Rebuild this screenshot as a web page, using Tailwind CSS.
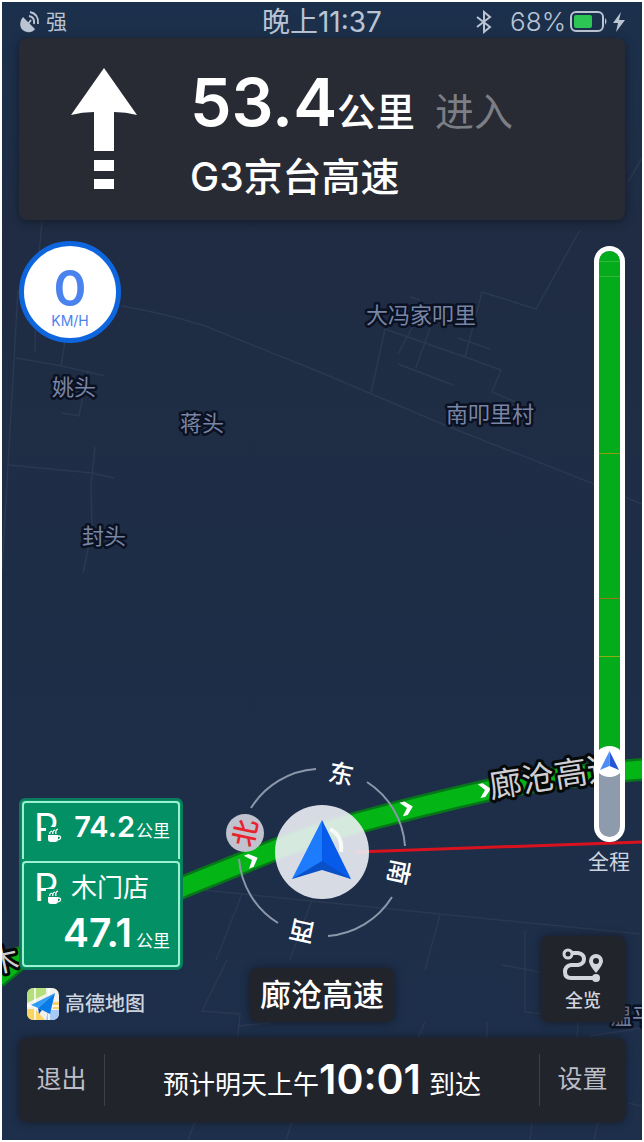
<!DOCTYPE html>
<html lang="zh-CN">
<head>
    <meta charset="UTF-8">
    <meta name="viewport" content="width=device-width, initial-scale=1.0">
    <title>高德地图导航</title>
    <script src="https://cdn.jsdelivr.net/npm/@tailwindcss/browser@4"></script>
</head>
<body class="bg-white p-[2px] font-['Inter','Noto_Sans_CJK_SC',sans-serif]">
    <main class="relative flex min-h-[calc(100vh-4px)] flex-col overflow-hidden bg-linear-to-b from-[#1b304c] via-[#1f2c43] via-20% to-[#1d2f4b]">

        <!-- Map -->
        <svg class="absolute inset-0 h-full w-full" viewBox="2 2 640 1138" preserveAspectRatio="xMidYMid slice" aria-label="地图">
            <!-- minor roads -->
            <g fill="none" stroke="#2a3850" stroke-width="1.5">
                <path d="M42 220L36 290L35 352M66 335L61 366M18 290L2 570M16 358L62 366L105 376M88 370L79 416L62 413M9 465L92 473L114 478M95 447L91 485L92 530L83 573"/>
                <path d="M121 306Q160 312 205 326L322 373L447 426L594 484L642 504M580 230L536 309L482 292L465 357M385 329L465 357L501 370L492 392L516 402M385 329L371 393M413 326L398 354M430 328L416 368M398 364L453 385M458 338L490 349M410 297L420 300M642 158L628 182"/>
                <path d="M183 888L640 934M242 894L216 960M312 900L290 960M440 915L425 970M227 960L202 1011L240 1014L238 1036M238 1026L270 1023M525 930L525 1012L580 1018M502 965L540 972M425 1022L418 1038M487 1022L487 1038M578 1022L577 1038M590 1036L642 1028M195 1122L188 1140M292 1122L286 1140M532 1122L530 1140M598 1122L594 1140M628 1103L642 1106"/>
            </g>

            <!-- route -->
            <path d="M-4 978L20 958L90 930L183 887L245 862Q300 838 360 822T485 791T648 769" fill="none" stroke="#07751a" stroke-width="23"/>
            <path d="M-4 978L20 958L90 930L183 887L245 862Q300 838 360 822T485 791T648 769" fill="none" stroke="#04b516" stroke-width="18"/>
            <g fill="#fff">
                <path id="chevron" d="M-6 -7H-1L6 0L-1 7H-6L0 0Z" transform="translate(407 808) rotate(-14)"/>
                <use href="#chevron" transform="translate(485 790) rotate(3) translate(-407 -808)"/>
                <use href="#chevron" transform="translate(252 860) rotate(-8) translate(-407 -808)"/>
            </g>
            <path d="M356 852L642 842" stroke="#d8131f" stroke-width="3"/>

            <!-- place names -->
            <g fill="#7885a5" stroke="#0a1122" stroke-width="5" stroke-linejoin="round" paint-order="stroke" font-size="22" text-anchor="middle">
                <text x="74" y="395">姚头</text>
                <text x="202" y="431">蒋头</text>
                <text x="421" y="323">大冯家叩里</text>
                <text x="490" y="422">南叩里村</text>
                <text x="104" y="544">封头</text>
                <text x="632" y="1024">温平</text>
            </g>
            <g fill="#d0ced3" stroke="#050a08" stroke-width="6" stroke-linejoin="round" paint-order="stroke" font-size="33">
                <text transform="translate(491 798) rotate(-9)">廊沧高速</text>
                <text transform="translate(-9 974) rotate(-12)" font-size="30">木</text>
            </g>

            <!-- compass -->
            <g fill="none" stroke="#8c97aa" stroke-width="2">
                <path d="M251 808A83 83 0 0 1 316 769"/>
                <path d="M367 782A83 83 0 0 1 405 846"/>
                <path d="M392 897A83 83 0 0 1 328 936"/>
                <path d="M278 923A83 83 0 0 1 239 859"/>
            </g>
            <circle cx="245" cy="833" r="19" fill="#c0c2ce"/>
            <g fill="#fff" font-size="25" font-weight="500" text-anchor="middle">
                <text transform="translate(341 774) rotate(12)" y="9">东</text>
                <text transform="translate(399 872) rotate(102)" y="9">南</text>
                <text transform="translate(302 931) rotate(192)" y="9">西</text>
                <text transform="translate(245 833) rotate(-78)" y="10" font-size="27" fill="#e8232c">北</text>
            </g>
            <circle cx="322" cy="852" r="47" fill="#eceef5" fill-opacity=".9"/>
            <path d="M330 829Q343 836 341 852" fill="none" stroke="#f8faf8" stroke-width="4"/>
            <path d="M322 820L351 879L322 868Z" fill="#065bea"/>
            <path d="M322 820L292 879L322 868Z" fill="#1d7cfe"/>
            <path d="M322 861L351 879L322 870L292 879Z" fill="#0a50c8"/>
        </svg>

        <!-- Status bar -->
        <header class="relative grid h-9 grid-cols-3 items-center px-4 text-[#bac4d3]">
            <div class="flex items-center gap-1 text-[21px]">
                <svg class="h-6 w-6" viewBox="0 0 24 24" fill="none" stroke="currentColor" stroke-width="1.8" aria-hidden="true">
                    <path d="M5 7C0 13 2 21 9 22Q14 23 17 19Z" fill="currentColor" stroke="none"/>
                    <path d="M10 14L13 10"/>
                    <path d="M11 6Q17 7 16 14M12 2Q21 4 20 14"/>
                </svg>
                <span>强</span>
            </div>
            <p class="text-center text-[28px] leading-9 whitespace-nowrap">晚上11:37</p>
            <div class="flex items-center justify-end text-[26px] font-light">
                <svg class="mr-4 h-6 w-5" viewBox="0 0 20 24" fill="none" stroke="currentColor" stroke-width="2" aria-label="蓝牙">
                    <path d="M3 7L16 17L10 22V2L16 7L3 17"/>
                </svg>
                <span>68%</span>
                <svg class="ml-1 h-6 w-14" viewBox="0 0 56 24" fill="none" aria-label="正在充电">
                    <rect x="1" y="2" width="32" height="19" rx="5" stroke="currentColor" stroke-width="2"/>
                    <rect x="4" y="5" width="18" height="13" rx="2" fill="#2bc653"/>
                    <path d="M35 8Q38 11 35 15Z" fill="currentColor"/>
                    <path d="M51 2L43 13H48L46 22L55 10H49Z" fill="currentColor"/>
                </svg>
            </div>
        </header>

        <!-- Next manoeuvre -->
        <section class="relative mx-[17px] flex h-[182px] items-center rounded-lg bg-[#282b34] pl-[52px] text-white shadow-[0_2px_8px_#141c2c]">
            <svg class="h-[122px] w-[66px]" viewBox="0 0 66 122" fill="#fff" aria-label="直行">
                <path d="M33 0L66 47Q55 44 43 44V83H23V44Q11 44 0 47Z"/>
                <path d="M23 92H43V103H23ZM23 111H43V121H23Z"/>
            </svg>
            <div class="ml-[53px] pt-1.5">
                <p class="flex items-baseline leading-[80px] whitespace-nowrap">
                    <strong class="text-[66px] font-semibold">53.4</strong>
                    <span class="text-[39px] font-medium">公里</span>
                    <span class="ml-5 text-[39px] text-[#7c7e85]">进入</span>
                </p>
                <h1 class="text-[39px] leading-[50px] font-medium">G3京台高速</h1>
            </div>
        </section>

        <section class="relative flex grow justify-between px-[17px]">
            <div class="flex flex-col items-start pt-[21px] pb-[18px]">
                <!-- Speed -->
                <div class="flex size-[102px] flex-col items-center rounded-full border-5 border-[#0e66de] bg-white pt-4 text-[#4a82ee]">
                    <strong class="text-[50px] leading-[52px] font-semibold">0</strong>
                    <span class="text-[14px] leading-[14px]">KM/H</span>
                </div>

                <!-- Service areas -->
                <div class="mt-auto w-[164px] rounded-md border-2 border-[#0a7b5c] bg-[#049065] p-px text-white">
                    <div class="flex h-[58px] items-center rounded-t-sm border-2 border-b-0 border-[#9df0cf] pr-2 pb-2 pl-2.5">
                        <div class="relative w-9 text-[38px] leading-[40px]">P
                            <svg class="absolute right-2 bottom-1 h-4 w-4 bg-[#049065]" viewBox="0 0 16 16" aria-hidden="true">
                                <path d="M2 8H12V12Q12 15 9 15H5Q2 15 2 12Z" fill="#fff"/>
                                <path d="M12 9Q16 9 14 12L12 13M4 7Q3 5 6 4M7 7Q6 4 9 3M10 7Q9 3 12 2" fill="none" stroke="#fff" stroke-width="1.3"/>
                            </svg>
                        </div>
                        <p class="ml-auto flex items-baseline text-[17px]"><strong class="mr-px text-[29px] font-semibold">74.2</strong>公里</p>
                    </div>
                    <div class="mt-0.5 h-[106px] rounded-sm border-2 border-[#9df0cf] pt-0.5 pr-2 pl-2.5">
                        <div class="flex items-center">
                            <div class="relative w-9 text-[38px] leading-[44px]">P
                                <svg class="absolute right-2 bottom-1 h-4 w-4 bg-[#049065]" viewBox="0 0 16 16" aria-hidden="true">
                                    <path d="M2 8H12V12Q12 15 9 15H5Q2 15 2 12Z" fill="#fff"/>
                                    <path d="M12 9Q16 9 14 12L12 13M4 7Q3 5 6 4M7 7Q6 4 9 3M10 7Q9 3 12 2" fill="none" stroke="#fff" stroke-width="1.3"/>
                                </svg>
                            </div>
                            <span class="ml-px text-[26px]">木门店</span>
                        </div>
                        <p class="flex items-baseline justify-end text-[17px] leading-[48px]"><strong class="mr-1 text-[39px] font-semibold">47.1</strong>公里</p>
                    </div>
                </div>

                <!-- Brand -->
                <div class="mt-[18px] ml-2 flex items-center gap-1.5">
                    <svg class="size-8" viewBox="0 0 32 32" aria-hidden="true">
                        <rect width="32" height="32" rx="7" fill="#f3f2ea"/>
                        <path d="M0 7Q0 0 7 0H19V6L0 15Z" fill="#b4df7c"/>
                        <path d="M0 21H8L18 32H7Q0 32 0 25Z" fill="#f8d465"/>
                        <path d="M26 14H32V21H26Z" fill="#f8d465"/>
                        <path d="M21 22H32V25Q32 32 25 32H19Z" fill="#a9c9f5"/>
                        <path d="M8 0V32M22 0V32M0 18H32" stroke="#fff" stroke-width="1.5"/>
                        <path d="M28 5L4 17L11 20Z" fill="#2f9cf8"/>
                        <path d="M28 5L11 20L23 26Z" fill="#087be8"/>
                        <path d="M11 20L15 22L12 26Z" fill="#0754b5"/>
                    </svg>
                    <span class="text-[20px] leading-8 font-medium text-[#ccd3de]">高德地图</span>
                </div>
            </div>

            <!-- Current road -->
            <p class="absolute bottom-4 left-1/2 -translate-x-1/2 rounded-lg bg-[#22242c] px-2.5 text-[31px] leading-[54px] font-medium whitespace-nowrap text-white shadow-[0_0_8px_#161b26]">廊沧高速</p>

            <div class="flex flex-col items-end pt-[26px] pb-4">
                <!-- Trip progress, tick places are percentages of the whole trip -->
                <div class="-mr-[5px] flex grow flex-col items-center">
                    <div class="relative w-[31px] grow overflow-hidden rounded-full border-5 border-white bg-[#8e9bad]">
                        <div class="relative bg-[#04ab1b]" style="height: 87%">
                            <i class="absolute h-px w-full bg-[#33b63c]" style="top: 2%"></i>
                            <i class="absolute h-px w-full bg-[#33b63c]" style="top: 5%"></i>
                            <i class="absolute h-px w-full bg-[#8c9a10]" style="top: 39.6%"></i>
                            <i class="absolute h-px w-full bg-[#9c7614]" style="top: 68%"></i>
                            <i class="absolute h-px w-full bg-[#8cb010]" style="top: 79.4%"></i>
                        </div>
                        <svg class="absolute -left-[5px] size-[31px]" style="top: 84.5%" viewBox="0 0 31 31" aria-hidden="true">
                            <circle cx="15.5" cy="15.5" r="15.5" fill="#fff"/>
                            <path d="M15.5 5L25 24L15.5 20Z" fill="#2456d6"/>
                            <path d="M15.5 5L6 24L15.5 20Z" fill="#4b8cf5"/>
                        </svg>
                    </div>
                    <span class="mt-1 text-[21px] leading-[32px] text-[#cdd5e0]">全程</span>
                </div>

                <button class="mt-[58px] flex h-[86px] w-[84px] flex-col items-center rounded-lg bg-[#22242c] pt-3 text-[18px] leading-[22px] font-medium text-[#d3d5dc] shadow-[0_0_8px_#161b26]">
                    <svg class="mb-2 h-[34px] w-[42px]" viewBox="0 0 42 34" fill="none" stroke="currentColor" stroke-width="4" aria-hidden="true">
                        <circle cx="6" cy="6" r="4" stroke-width="3"/>
                        <path d="M10 5H16Q22 6 22 11T16 17H9Q3 18 3 24T9 30H34"/>
                        <circle cx="34" cy="30" r="4" fill="currentColor" stroke="none"/>
                        <path d="M34 25Q27 17 27 13A7 7 0 0 1 41 13Q41 17 34 25Z" fill="currentColor" stroke="none"/>
                        <circle cx="34" cy="13" r="3" fill="#22242c" stroke="none"/>
                    </svg>
                    全览
                </button>
            </div>
        </section>

        <!-- Bottom bar -->
        <footer class="relative mx-[17px] mb-[18px] flex h-[84px] items-center rounded-lg bg-[#22242c] text-[26px] text-white shadow-[0_0_8px_#161b26]">
            <button class="h-[52px] w-[86px] border-r border-[#3d4049] text-[25px] text-[#bbbec8]">退出</button>
            <p class="flex grow items-baseline justify-center whitespace-nowrap">预计明天上午<strong class="mr-2 text-[41px] font-semibold">10:01</strong>到达</p>
            <button class="h-[52px] w-[86px] border-l border-[#3d4049] text-[25px] text-[#bbbec8]">设置</button>
        </footer>
    </main>
</body>
</html>
